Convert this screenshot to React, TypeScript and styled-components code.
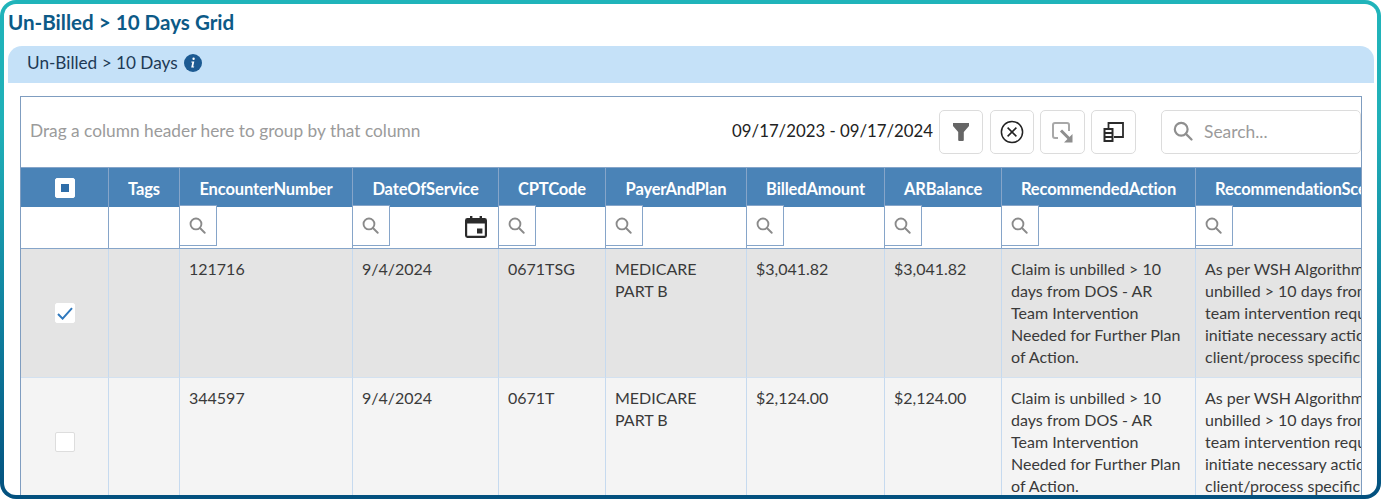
import React, { FC } from 'react';
import styled, { createGlobalStyle } from 'styled-components';

const GlobalStyle = createGlobalStyle`
  html, body {
    margin: 0;
    height: 100%;
    overflow: hidden;
    background: #fff;
    font-family: Lato, "Open Sans", sans-serif;
  }
`;

const Frame = styled.div`
  box-sizing: border-box;
  height: 499px;
  padding: 4px;
  border-radius: 16px;
  background: linear-gradient(180deg, #20b4ba 0%, #20b0b8 25%, #0f7f9e 65%, #03507e 100%);
`;

const Inner = styled.div`
  height: 100%;
  overflow: hidden;
  padding: 0 3px 0 4px;
  box-sizing: border-box;
  border-radius: 12px;
  background: #fff;
`;

const Title = styled.h1`
  margin: 0;
  height: 42px;
  line-height: 37px;
  font-size: 20.6px;
  font-weight: 700;
  color: #0c5a87;
`;

const SectionBar = styled.div`
  display: flex;
  align-items: center;
  gap: 6px;
  box-sizing: border-box;
  height: 37px;
  padding: 0 0 3px 19px;
  border-radius: 14px 14px 0 0;
  background: #c5e1f8;
  font-size: 17.2px;
  line-height: 20px;
  color: #1d3a55;
`;

const SectionLabel = styled.span`
  padding-bottom: 1px;
`;

const Panel = styled.div`
  margin: 13px 12px 0 12px;
  border: 1px solid #7f9dc0;
  border-bottom: 0;
  overflow: hidden;
`;

const Toolbar = styled.div`
  display: flex;
  align-items: center;
  height: 70px;
  padding: 0 0 0 9px;
`;

const GroupHint = styled.span`
  flex: 1;
  padding-bottom: 4px;
  font-size: 17.3px;
  color: #9b9b9b;
`;

const DateRange = styled.span`
  margin-right: 6px;
  padding-bottom: 3px;
  font-size: 16.8px;
  color: #222;
`;

const ToolButton = styled.button<{ $gap?: number; $width?: number }>`
  display: flex;
  align-items: center;
  justify-content: center;
  box-sizing: border-box;
  width: ${(p) => p.$width ?? 45}px;
  height: 44px;
  margin-right: ${(p) => p.$gap ?? 6}px;
  padding: 0;
  border: 1px solid #dcdcdc;
  border-radius: 5px;
  background: #fff;
`;

const SearchBox = styled.div`
  display: flex;
  align-items: center;
  gap: 11px;
  box-sizing: border-box;
  width: 200px;
  height: 44px;
  padding: 0 0 2px 11px;
  border: 1px solid #dcdcdc;
  border-radius: 5px;
  font-size: 17.4px;
  color: #9b9b9b;
`;

const Table = styled.table`
  table-layout: fixed;
  width: 1445px;
  border-collapse: separate;
  border-spacing: 0;
`;

const HeadCell = styled.th<{ $start?: boolean }>`
  box-sizing: border-box;
  height: 40px;
  padding: 0 0 0 ${(p) => (p.$start ? 19 : 0)}px;
  overflow: hidden;
  white-space: nowrap;
  border-right: 1px solid #86a5c9;
  border-top: 1px solid #86a5c9;
  background: #4a83b7;
  font-size: 16.5px;
  font-weight: 700;
  letter-spacing: -0.15px;
  text-align: ${(p) => (p.$start ? 'left' : 'center')};
  color: #fff;
`;

const HeadLabel = styled.span`
  position: relative;
  top: 1px;
`;

const FilterCell = styled.td`
  box-sizing: border-box;
  height: 42px;
  padding: 0;
  vertical-align: top;
  border-right: 1px solid #86a5c9;
  border-bottom: 1px solid #86a5c9;
  background: #fff;
`;

const FilterInner = styled.div`
  display: flex;
  align-items: center;
  justify-content: space-between;
  padding-right: 11px;
`;

const FilterIconBox = styled.div`
  position: relative;
  display: flex;
  align-items: center;
  justify-content: center;
  box-sizing: border-box;
  width: 38px;
  height: 41px;
  margin: -2px 0 0 -1px;
  padding-right: 2px;
  border: 1px solid #86a5c9;
  background: #fff;
`;

const BodyCell = styled.td<{ $selected?: boolean }>`
  box-sizing: border-box;
  height: 129px;
  padding: 9px 10px 0 9px;
  vertical-align: top;
  overflow: hidden;
  border-right: 1px solid #c6daef;
  border-bottom: 1px solid #d3e1f0;
  background: ${(p) => (p.$selected ? '#e4e4e4' : '#f4f4f4')};
  font-size: 16px;
  line-height: 22px;
  color: #3a3a3a;
`;

const CheckCell = styled(BodyCell)`
  padding: 0 0 2px;
  vertical-align: middle;
  text-align: center;
`;

const CheckBox = styled.span<{ $head?: boolean; $checked?: boolean }>`
  display: inline-flex;
  align-items: center;
  justify-content: center;
  box-sizing: border-box;
  width: 20px;
  height: 20px;
  vertical-align: middle;
  border: 1px solid ${(p) => (p.$head || p.$checked ? '#fff' : '#dddddd')};
  border-radius: 2px;
  background: #fff;
`;

const Indeterminate = styled.span`
  width: 8px;
  height: 8px;
  background: #2f6ea9;
`;

const SearchIcon: FC<{ size: number; color: string }> = ({ size, color }) => (
  <svg width={size} height={size} viewBox="0 0 20 20" fill="none" stroke={color} strokeWidth="2.2" strokeLinecap="round">
    <circle cx="8.2" cy="8.2" r="6.4" />
    <path d="M12.9 12.9 18.5 18.5" />
  </svg>
);

const InfoIcon = () => (
  <svg width="18" height="18" viewBox="0 0 18 18">
    <circle cx="9" cy="9" r="9" fill="#1c5a92" />
    <path d="M9.6 3.6a1.2 1.2 0 1 1-.01 2.4 1.2 1.2 0 0 1 .01-2.4ZM7.4 7.6h2.9l-1.1 5h1l-.2 1H7.2l1.1-5h-1Z" fill="#fff" />
  </svg>
);

const FilterIcon = () => (
  <svg width="16" height="18" viewBox="0 0 16 18">
    <path d="M0 0h16v3l-5.2 6v8a1 1 0 0 1-1 1H6.2a1 1 0 0 1-1-1V9L0 3Z" fill="#666" />
  </svg>
);

const ClearIcon = () => (
  <svg width="24" height="24" viewBox="0 0 24 24" fill="none" stroke="#222" strokeWidth="1.5">
    <circle cx="12" cy="12" r="10.6" />
    <path d="M7.6 7.6 16.4 16.4M16.4 7.6 7.6 16.4" />
  </svg>
);

const ExportIcon = () => (
  <svg width="21" height="21" viewBox="0 0 21 21" fill="none">
    <path d="M6 16H3a2 2 0 0 1-2-2V3a2 2 0 0 1 2-2h12a2 2 0 0 1 2 2v6" stroke="#a8a8a8" strokeWidth="2" />
    <path d="M9 8.5l8 8" stroke="#8e8e8e" strokeWidth="3" />
    <path d="M20.5 12v8.5H12Z" fill="#8e8e8e" />
  </svg>
);

const ColumnsIcon = () => (
  <svg width="21" height="20" viewBox="0 0 21 20" fill="none" stroke="#2b2b2b">
    <path d="M5.5 6V1h14.5v14H11" strokeWidth="1.8" />
    <path d="M1.5 7h8v12h-8ZM1.5 11h8M1.5 15h8" strokeWidth="2" />
  </svg>
);

const CalendarIcon = () => (
  <svg width="22" height="22" viewBox="0 0 22 22">
    <path
      fillRule="evenodd"
      d="M5 0h2.4v2h7.2V0H17v2h2.6A2.4 2.4 0 0 1 22 4.4v15.2a2.4 2.4 0 0 1-2.4 2.4H2.4A2.4 2.4 0 0 1 0 19.6V4.4A2.4 2.4 0 0 1 2.4 2H5ZM2.2 7.4v12.4h17.6V7.4Z"
      fill="#2b2b2b"
    />
    <path d="M12 12.4h5.4v5H12Z" fill="#2b2b2b" />
  </svg>
);

const CheckMark = () => (
  <svg width="16" height="13" viewBox="0 0 16 13" fill="none" stroke="#2f78bd" strokeWidth="2">
    <path d="M1 7l4.6 4.6L15 1.2" />
  </svg>
);

const columnWidths = [88, 71, 173, 146, 107, 141, 138, 117, 194, 270];

const columns = [
  'EncounterNumber',
  'DateOfService',
  'CPTCode',
  'PayerAndPlan',
  'BilledAmount',
  'ARBalance',
  'RecommendedAction',
  'RecommendationScenario',
];

const action = 'Claim is unbilled > 10 days from DOS - AR Team Intervention Needed for Further Plan of Action.';
const scenario =
  'As per WSH Algorithm claim is unbilled > 10 days from DOS - AR team intervention required to initiate necessary action as per client/process specific guidelines.';

const rows = [
  { id: '121716', date: '9/4/2024', cpt: '0671TSG', amount: '$3,041.82', selected: true },
  { id: '344597', date: '9/4/2024', cpt: '0671T', amount: '$2,124.00', selected: false },
];

export default function App() {
  return (
    <>
      <GlobalStyle />
      <Frame>
        <Inner>
          <Title>Un-Billed &gt; 10 Days Grid</Title>
          <SectionBar>
            <SectionLabel>Un-Billed &gt; 10 Days</SectionLabel>
            <InfoIcon />
          </SectionBar>
          <Panel>
            <Toolbar>
              <GroupHint>Drag a column header here to group by that column</GroupHint>
              <DateRange>09/17/2023 - 09/17/2024</DateRange>
              <ToolButton $width={44} $gap={7}><FilterIcon /></ToolButton>
              <ToolButton $width={44}><ClearIcon /></ToolButton>
              <ToolButton><ExportIcon /></ToolButton>
              <ToolButton $gap={25}><ColumnsIcon /></ToolButton>
              <SearchBox>
                <SearchIcon size={20} color="#8f8f8f" />
                Search...
              </SearchBox>
            </Toolbar>
            <Table>
              <colgroup>
                {columnWidths.map((w, i) => (
                  <col key={i} style={{ width: w }} />
                ))}
              </colgroup>
              <thead>
                <tr>
                  <HeadCell>
                    <CheckBox $head>
                      <Indeterminate />
                    </CheckBox>
                  </HeadCell>
                  <HeadCell><HeadLabel>Tags</HeadLabel></HeadCell>
                  {columns.map((c) => (
                    <HeadCell key={c} $start={c === 'RecommendationScenario'}>
                      <HeadLabel>{c}</HeadLabel>
                    </HeadCell>
                  ))}
                </tr>
                <tr>
                  <FilterCell />
                  <FilterCell />
                  {columns.map((c) => (
                    <FilterCell key={c}>
                      <FilterInner>
                        <FilterIconBox>
                          <SearchIcon size={17} color="#8a8a8a" />
                        </FilterIconBox>
                        {c === 'DateOfService' && <CalendarIcon />}
                      </FilterInner>
                    </FilterCell>
                  ))}
                </tr>
              </thead>
              <tbody>
                {rows.map((r) => (
                  <tr key={r.id}>
                    <CheckCell $selected={r.selected}>
                      <CheckBox $checked={r.selected}>{r.selected && <CheckMark />}</CheckBox>
                    </CheckCell>
                    <BodyCell $selected={r.selected} />
                    <BodyCell $selected={r.selected}>{r.id}</BodyCell>
                    <BodyCell $selected={r.selected}>{r.date}</BodyCell>
                    <BodyCell $selected={r.selected}>{r.cpt}</BodyCell>
                    <BodyCell $selected={r.selected}>MEDICARE PART B</BodyCell>
                    <BodyCell $selected={r.selected}>{r.amount}</BodyCell>
                    <BodyCell $selected={r.selected}>{r.amount}</BodyCell>
                    <BodyCell $selected={r.selected}>{action}</BodyCell>
                    <BodyCell $selected={r.selected}>{scenario}</BodyCell>
                  </tr>
                ))}
              </tbody>
            </Table>
          </Panel>
        </Inner>
      </Frame>
    </>
  );
}
